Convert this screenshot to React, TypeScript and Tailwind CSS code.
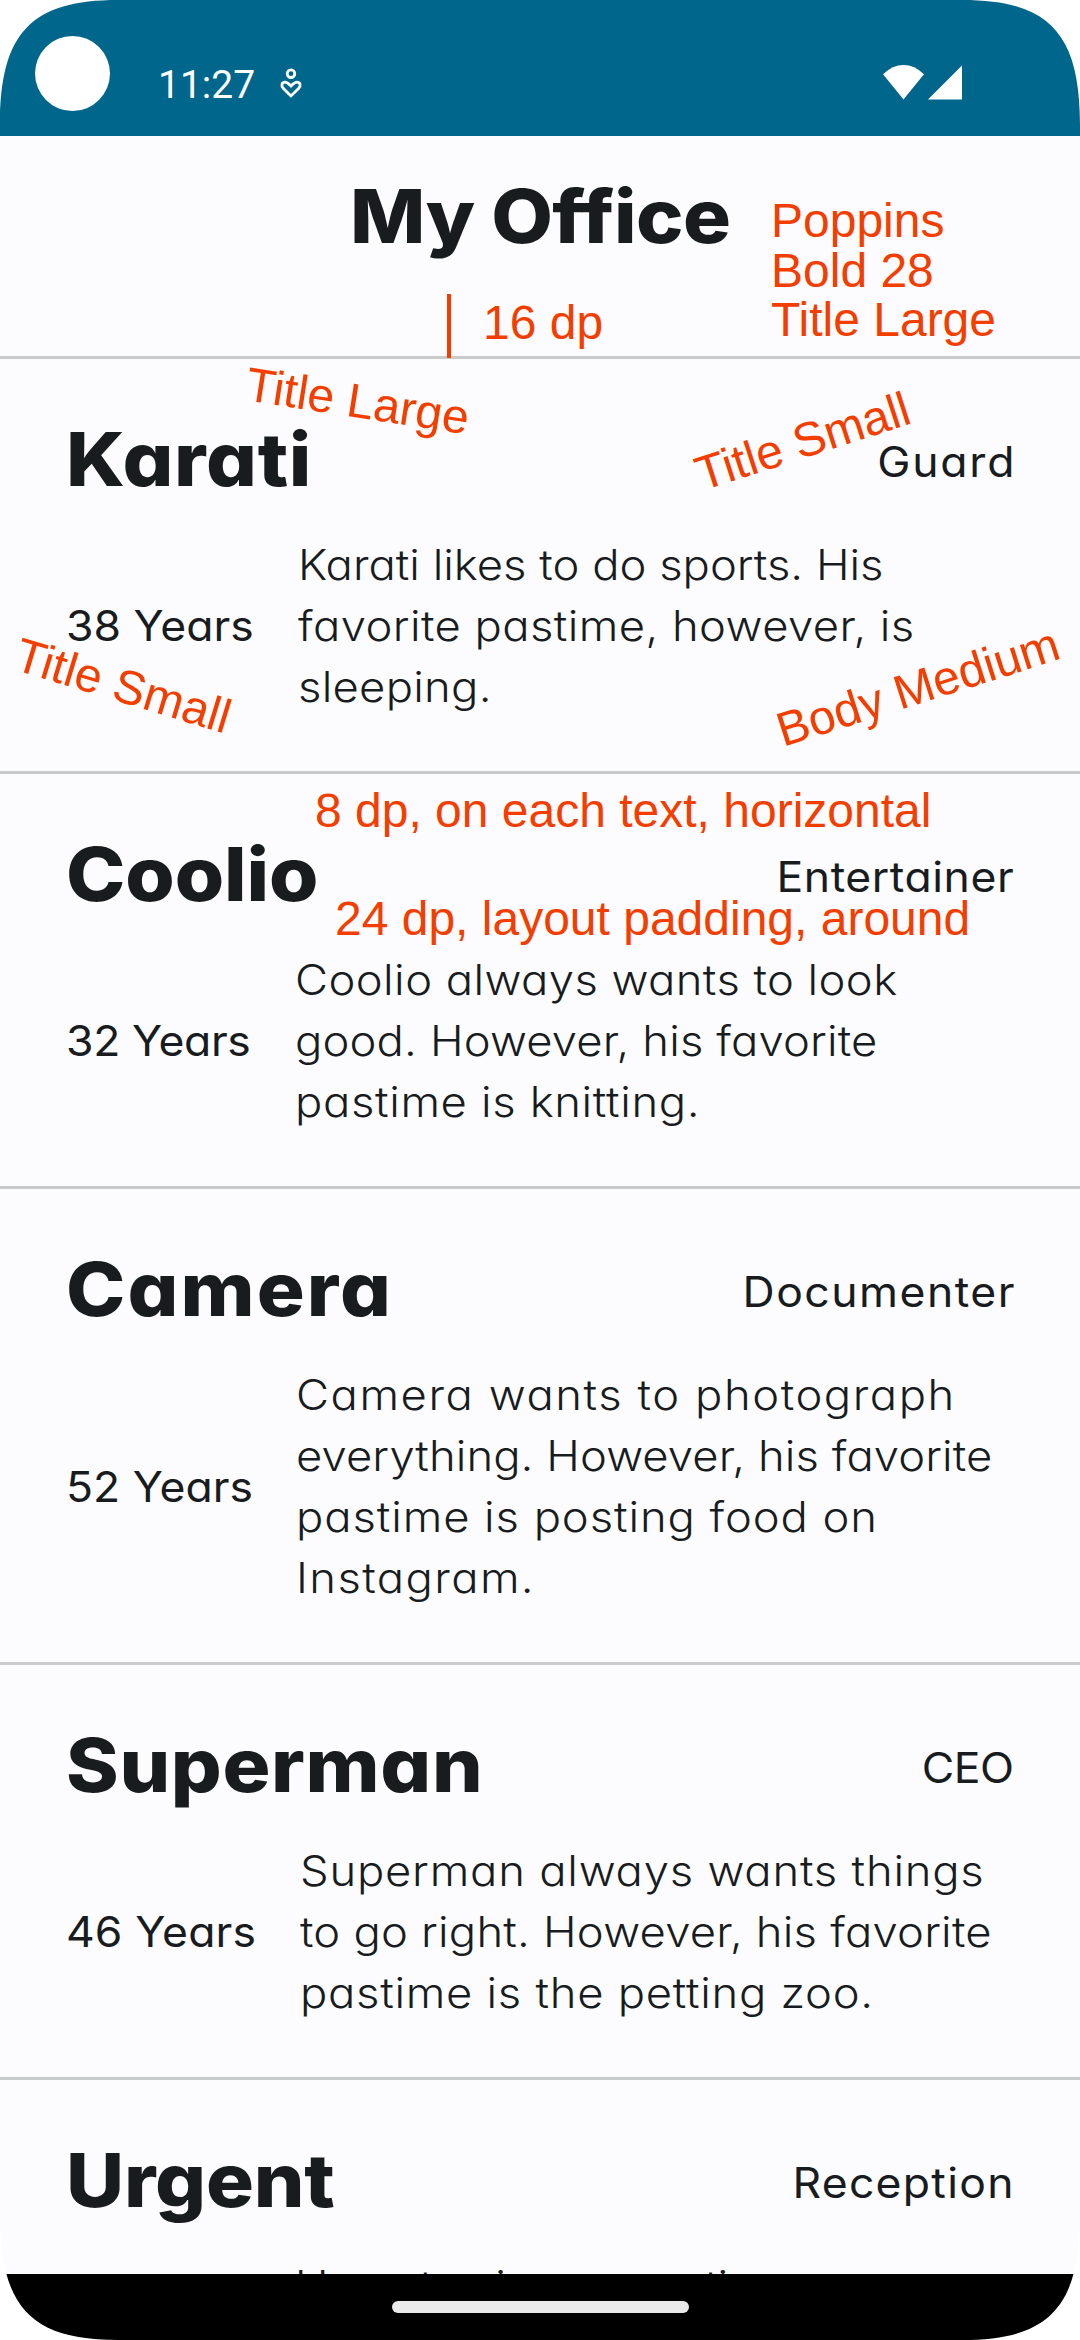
type Line = { text: string; tracking: string };

type Employee = {
  name: string;
  nameTracking: string;
  role: string;
  roleTracking: string;
  age: string;
  ageClass: string;
  bio: Line[];
};

const employees: Employee[] = [
  {
    name: "Karati",
    nameTracking: "tracking-[0.6px]",
    role: "Guard",
    roleTracking: "tracking-[1.7px] -mr-[2px]",
    age: "38 Years",
    ageClass: "w-[232px]",
    bio: [
      { text: "Karati likes to do sports. His", tracking: "tracking-[0.01px]" },
      { text: "favorite pastime, however, is", tracking: "tracking-[0.4px]" },
      { text: "sleeping.", tracking: "tracking-[0.25px]" },
    ],
  },
  {
    name: "Coolio",
    nameTracking: "tracking-[-0.1px]",
    role: "Entertainer",
    roleTracking: "tracking-[0.5px]",
    age: "32 Years",
    ageClass: "w-[229px] tracking-[-0.35px]",
    bio: [
      { text: "Coolio always wants to look", tracking: "tracking-[0.4px]" },
      { text: "good. However, his favorite", tracking: "tracking-[0.15px]" },
      { text: "pastime is knitting.", tracking: "tracking-[0.6px]" },
    ],
  },
  {
    name: "Camera",
    nameTracking: "tracking-[1.9px]",
    role: "Documenter",
    roleTracking: "tracking-[1.4px] -mr-[2px]",
    age: "52 Years",
    ageClass: "w-[230px]",
    bio: [
      { text: "Camera wants to photograph", tracking: "tracking-[1.45px]" },
      { text: "everything. However, his favorite", tracking: "tracking-[0.08px]" },
      { text: "pastime is posting food on", tracking: "tracking-[0.85px]" },
      { text: "Instagram.", tracking: "tracking-[1.3px]" },
    ],
  },
  {
    name: "Superman",
    nameTracking: "tracking-[0.6px]",
    role: "CEO",
    roleTracking: "tracking-[-0.46px]",
    age: "46 Years",
    ageClass: "w-[234px] tracking-[0.1px]",
    bio: [
      { text: "Superman always wants things", tracking: "tracking-[0.73px]" },
      { text: "to go right. However, his favorite", tracking: "tracking-[0.2px]" },
      { text: "pastime is the petting zoo.", tracking: "tracking-[0.67px]" },
    ],
  },
  {
    name: "Urgent",
    nameTracking: "tracking-[-0.2px]",
    role: "Reception",
    roleTracking: "tracking-[1.2px] -mr-px",
    age: "",
    ageClass: "w-[229px]",
    bio: [{ text: "Urgent enjoys reception", tracking: "tracking-[-0.85px]" }],
  },
];

function StatusBar() {
  return (
    <div className="flex h-[136px] shrink-0 items-start bg-[#00668b] text-white">
      <div className="mt-9 ml-[35px] size-[75px] shrink-0 rounded-full bg-white" />
      <span className="mt-[62px] ml-[48px] font-['Roboto',sans-serif] text-[39px] leading-[46px]">
        11:27
      </span>
      <svg className="mt-[67px] ml-[24px]" width="24" height="33" viewBox="0 0 24 33" fill="none" stroke="currentColor" strokeWidth="2.8">
        <circle cx="12" cy="6.7" r="3.8" />
        <path d="M12 28.900 L4.200 21.200 C2 19 2.600 15.600 5.600 15.200 C8.200 14.900 10 17 12 19 C14 17 15.800 14.900 18.400 15.200 C21.400 15.600 22 19 19.800 21.200 Z" />
      </svg>
      <svg className="mt-[65px] mr-[118px] ml-auto" width="79" height="35" viewBox="0 0 79 35" fill="currentColor">
        <path d="M20.5 34.5 L0 9.3 Q9.5 0 20.5 0 Q31.500 0 41 9.3 Z" />
        <path d="M45 34.500 L79 0.500 V34.500 Z" />
      </svg>
    </div>
  );
}

function EmployeeRow({ e }: { e: Employee }) {
  return (
    <section className="shrink-0 border-b-[3px] border-[#c9caca] px-[66px] pt-[55px] pb-[54px] last:border-b-0">
      <div className="flex items-center justify-between">
        <h2 className={`origin-left scale-x-[1.08] text-[74px] leading-[90px] font-extrabold ${e.nameTracking}`}>
          {e.name}
        </h2>
        <span className={`origin-right scale-x-[1.06] pt-[5px] text-[42px] leading-[51px] ${e.roleTracking}`}>
          {e.role}
        </span>
      </div>
      <div className="mt-[30px] flex items-center">
        <div className="flex shrink-0">
          <span className={`origin-left scale-x-[1.06] text-[42px] leading-[61px] whitespace-pre ${e.ageClass}`}>
            {e.age}
          </span>
        </div>
        <p className="flex flex-col items-start text-[42px] leading-[61px] font-light whitespace-nowrap">
          {e.bio.map((l) => (
            <span key={l.text} className={`origin-left scale-x-[1.08] ${l.tracking}`}>
              {l.text}
            </span>
          ))}
        </p>
      </div>
    </section>
  );
}

function Note({ className, children }: { className: string; children: string }) {
  return <span className={`absolute origin-[0_41px] whitespace-pre ${className}`}>{children}</span>;
}

function Notes() {
  return (
    <div className="pointer-events-none absolute inset-0 font-['Liberation_Sans',Arial,sans-serif] text-[48px] leading-[50px] text-[#f43e00] [font-feature-settings:normal]">
      <Note className="top-[196px] left-[771px] leading-[49.5px]">{"Poppins\nBold 28\nTitle Large"}</Note>
      <div className="absolute top-[294px] left-[447px] h-16 w-1 bg-[#f43e00]" />
      <Note className="top-[298px] left-[483px]">16 dp</Note>
      <Note className="top-[359px] left-[244px] rotate-[8.8deg]">Title Large</Note>
      <Note className="top-[450px] left-[702px] rotate-[-17.9deg]">Title Small</Note>
      <Note className="top-[628px] left-[12px] rotate-[16.9deg]">Title Small</Note>
      <Note className="top-[706px] left-[783px] rotate-[-17.6deg]">Body Medium</Note>
      <Note className="top-[786px] left-[315px]">8 dp, on each text, horizontal</Note>
      <Note className="top-[894px] left-[335px]">24 dp, layout padding, around</Note>
    </div>
  );
}

function Corner({ className }: { className: string }) {
  return (
    <svg className={`absolute ${className}`} width="118" height="125" viewBox="0 0 118 125" fill="#fff">
      <path d="M0 0 H118 C32 0 0 32 0 125 Z" />
    </svg>
  );
}

export default function App() {
  return (
    <main className="relative flex h-[2340px] w-[1080px] flex-col overflow-hidden bg-[#fcfcff] font-['Inter',sans-serif] text-[#191c1e] [font-feature-settings:'cv11']">
      <StatusBar />
      <header className="flex h-[223px] shrink-0 justify-center border-b-[3px] border-[#c9caca] pt-[35px]">
        <h1 className="scale-x-[1.08] text-[74px] leading-[90px] font-extrabold tracking-[-0.6px]">My Office</h1>
      </header>
      <div className="flex min-h-0 flex-1 flex-col overflow-hidden">
        {employees.map((e) => (
          <EmployeeRow key={e.name} e={e} />
        ))}
      </div>
      <nav className="flex h-[66px] shrink-0 justify-center bg-black pt-[27px]">
        <div className="h-3 w-[297px] rounded-full bg-[#eaeaea]" />
      </nav>
      <Notes />
      <Corner className="top-0 left-0" />
      <Corner className="top-0 right-0 -scale-x-100" />
      <Corner className="bottom-0 left-0 -scale-y-100" />
      <Corner className="right-0 bottom-0 -scale-100" />
    </main>
  );
}
